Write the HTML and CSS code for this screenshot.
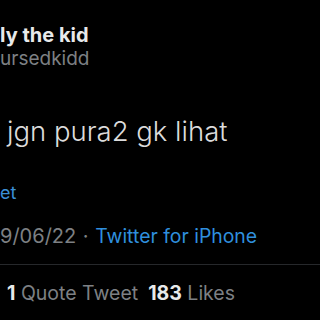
FILE: index.html
```html
<!DOCTYPE html>
<html lang="en">
<head>
  <meta charset="UTF-8">
  <meta name="viewport" content="width=device-width, initial-scale=1.0">
  <title>Tweet</title>
  <link rel="stylesheet" href="styles.css">
</head>
<body>
  <main class="tweet">
    <div class="author">
      <div class="name">ly the kid</div>
      <div class="handle">ursedkidd</div>
    </div>
    <p class="text">jgn pura2 gk lihat</p>
    <a href="#" class="translate">et</a>
    <div class="meta">
      <span class="date">9/06/22</span>
      <span class="dot">·</span>
      <a href="#" class="source">Twitter for iPhone</a>
    </div>
    <div class="stats">
      <span class="stat"><b>1</b> Quote Tweet</span>
      <span class="stat"><b>183</b> Likes</span>
    </div>
  </main>
</body>
</html>
```

FILE: styles.css
```css
html {
  background-color: #000;
}
body {
  margin: 0;
  font-family: Inter, "Noto Sans", sans-serif;
  color: #e7e9ea;
}
.tweet {
  display: flex;
  flex-direction: column;
  align-items: flex-start;
}
.author {
  padding-top: 23px;
}
.name {
  font-weight: 700;
  font-size: 20px;
  line-height: 24px;
}
.handle {
  font-size: 19px;
  line-height: 24px;
  color: #7d8084;
}
.text {
  margin: 43px 0 0 7px;
  font-size: 27.5px;
  font-weight: 300;
  line-height: 34px;
  color: #dcdcdc;
}
.translate {
  margin-top: 34px;
  font-size: 18px;
  line-height: 22px;
  color: #3b8fd6;
  text-decoration: none;
}
.meta {
  margin-top: 20px;
  width: 100%;
  padding-bottom: 16px;
  border-bottom: 1px solid #26282b;
  font-size: 20px;
  line-height: 24px;
  color: #7d8084;
}
.dot {
  margin: 0 1px;
}
.source {
  font-size: 19.4px;
  color: #2f8fdd;
  text-decoration: none;
}
.stats {
  display: flex;
  gap: 10px;
  padding: 16px 0 0 7px;
  font-size: 19.5px;
  line-height: 24px;
  color: #7d8084;
}
.stat b {
  color: #e7e9ea;
  font-weight: 700;
}
```
